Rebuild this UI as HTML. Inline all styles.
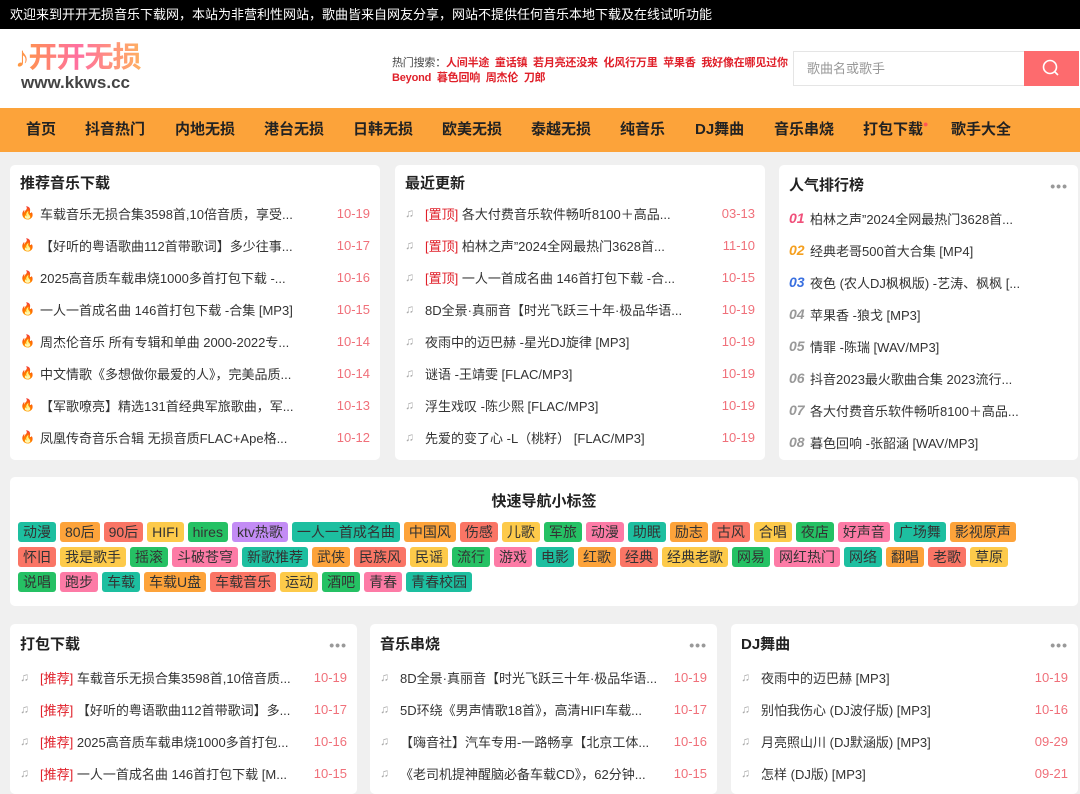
<!DOCTYPE html>
<html><head><meta charset="utf-8"><style>
*{margin:0;padding:0;box-sizing:border-box}
body{width:1080px;height:783px;overflow:hidden;background:#f0f0f0;font-family:"Liberation Sans","Noto Sans CJK SC",sans-serif;color:#333;position:relative}
.top{position:absolute;left:0;top:0;width:1080px;height:29px;background:#000;color:#fff;font-size:13px;line-height:29px;padding-left:10px}
.hdr{position:absolute;left:0;top:29px;width:1080px;height:79px;background:#fff}
.nav{position:absolute;left:0;top:108px;width:1080px;height:44px;background:#fca33a}
.nav span{position:absolute;top:0;line-height:44px;font-size:15px;font-weight:bold;color:#222}
.card{position:absolute;background:#fff;border-radius:5px;padding:0 10px}
.ttl{font-size:15px;font-weight:bold;color:#222;height:24px;line-height:22px;margin-top:8px;position:relative}
.dots{position:absolute;right:0;top:0;color:#999;font-size:14px;letter-spacing:1px}
.row{height:32px;display:flex;align-items:center;font-size:13px;color:#333;white-space:nowrap}
.row .t{flex:1;overflow:hidden;text-overflow:ellipsis}
.row .d{color:#f0707a;margin-left:8px}
.ic{width:20px;flex:none;color:#aaa;font-size:12px}
.red{color:#e0202a}
.rk{font-style:italic;font-weight:bold;width:21px;flex:none;font-size:14px;color:#999}
.tags{position:absolute;left:18px;top:522px;width:1050px}
.tags span{float:left;height:20px;line-height:20px;font-size:14px;padding:0 5px;margin:0 4px 5px 0;border-radius:3px;color:#333}
.a{background:#1dbfa0}.b{background:#fda33a}.c{background:#fa7565}.y{background:#fdca4a}.g{background:#25c164}.p{background:#c38cf5}.k{background:#fd7ba6}
</style></head><body>
<div class="top">欢迎来到开开无损音乐下载网，本站为非营利性网站，歌曲皆来自网友分享，网站不提供任何音乐本地下载及在线试听功能</div>
<div class="hdr">
 <div style="position:absolute;left:15px;top:13px;font-size:29px;font-weight:bold;line-height:32px;letter-spacing:-1px;background:linear-gradient(90deg,#ff9a3c,#ff6fa0,#ffb060);-webkit-background-clip:text;color:transparent">♪开开无损</div>
 <div style="position:absolute;left:21px;top:44px;font-size:17px;font-weight:bold;color:#444">www.kkws.cc</div>
 <div style="position:absolute;left:392px;top:27px;font-size:11px;line-height:15px;font-weight:bold;color:#e0202a;white-space:nowrap;letter-spacing:-0.2px"><span style="color:#444;font-weight:normal">热门搜索：</span>人间半途&nbsp; 童话镇&nbsp; 若月亮还没来&nbsp; 化风行万里&nbsp; 苹果香&nbsp; 我好像在哪见过你<br>Beyond&nbsp; 暮色回响&nbsp; 周杰伦&nbsp; 刀郎</div>
 <div style="position:absolute;left:793px;top:22px;width:232px;height:35px;border:1px solid #e5e5e5;font-size:13px;color:#999;line-height:33px;padding-left:13px">歌曲名或歌手</div>
 <div style="position:absolute;left:1024px;top:22px;width:55px;height:35px;background:#fd6b6e"><svg width="55" height="35"><circle cx="26" cy="16" r="6.5" fill="none" stroke="#fff" stroke-width="1.6"/><line x1="31" y1="21" x2="34" y2="24" stroke="#fff" stroke-width="1.6"/></svg></div>
</div>
<div class="nav">
<span style="left:26px">首页</span><span style="left:85px">抖音热门</span><span style="left:175px">内地无损</span><span style="left:264px">港台无损</span><span style="left:353px">日韩无损</span><span style="left:442px">欧美无损</span><span style="left:531px">泰越无损</span><span style="left:620px">纯音乐</span><span style="left:695px">DJ舞曲</span><span style="left:774px">音乐串烧</span><span style="left:863px">打包下载<b style="color:#f55;font-size:9px;vertical-align:top;position:relative;top:-6px">●</b></span><span style="left:951px">歌手大全</span>
</div>

<div class="card" style="left:10px;top:165px;width:370px;height:295px">
<div class="ttl">推荐音乐下载</div>
<div class="row"><span class="ic" style="color:#f06a2a">🔥</span><span class="t">车载音乐无损合集3598首,10倍音质，享受...</span><span class="d">10-19</span></div>
<div class="row"><span class="ic" style="color:#f06a2a">🔥</span><span class="t">【好听的粤语歌曲112首带歌词】多少往事...</span><span class="d">10-17</span></div>
<div class="row"><span class="ic" style="color:#f06a2a">🔥</span><span class="t">2025高音质车载串烧1000多首打包下载 -...</span><span class="d">10-16</span></div>
<div class="row"><span class="ic" style="color:#f06a2a">🔥</span><span class="t">一人一首成名曲 146首打包下载 -合集 [MP3]</span><span class="d">10-15</span></div>
<div class="row"><span class="ic" style="color:#f06a2a">🔥</span><span class="t">周杰伦音乐 所有专辑和单曲 2000-2022专...</span><span class="d">10-14</span></div>
<div class="row"><span class="ic" style="color:#f06a2a">🔥</span><span class="t">中文情歌《多想做你最爱的人》，完美品质...</span><span class="d">10-14</span></div>
<div class="row"><span class="ic" style="color:#f06a2a">🔥</span><span class="t">【军歌嘹亮】精选131首经典军旅歌曲，军...</span><span class="d">10-13</span></div>
<div class="row"><span class="ic" style="color:#f06a2a">🔥</span><span class="t">凤凰传奇音乐合辑 无损音质FLAC+Ape格...</span><span class="d">10-12</span></div>
</div>

<div class="card" style="left:395px;top:165px;width:370px;height:295px">
<div class="ttl">最近更新</div>
<div class="row"><span class="ic">♫</span><span class="t"><span class="red">[置顶]</span> 各大付费音乐软件畅听8100＋高品...</span><span class="d">03-13</span></div>
<div class="row"><span class="ic">♫</span><span class="t"><span class="red">[置顶]</span> 柏林之声”2024全网最热门3628首...</span><span class="d">11-10</span></div>
<div class="row"><span class="ic">♫</span><span class="t"><span class="red">[置顶]</span> 一人一首成名曲 146首打包下载 -合...</span><span class="d">10-15</span></div>
<div class="row"><span class="ic">♫</span><span class="t">8D全景·真丽音【时光飞跃三十年·极品华语...</span><span class="d">10-19</span></div>
<div class="row"><span class="ic">♫</span><span class="t">夜雨中的迈巴赫 -星光DJ旋律 [MP3]</span><span class="d">10-19</span></div>
<div class="row"><span class="ic">♫</span><span class="t">谜语 -王靖雯 [FLAC/MP3]</span><span class="d">10-19</span></div>
<div class="row"><span class="ic">♫</span><span class="t">浮生戏叹 -陈少熙 [FLAC/MP3]</span><span class="d">10-19</span></div>
<div class="row"><span class="ic">♫</span><span class="t">先爱的变了心 -L（桃籽） [FLAC/MP3]</span><span class="d">10-19</span></div>
</div>

<div class="card" style="left:779px;top:165px;width:299px;height:295px">
<div class="ttl" style="margin-top:10px;height:27px">人气排行榜<span class="dots">•••</span></div>
<div class="row"><span class="rk" style="color:#f0507a">01</span><span class="t">柏林之声”2024全网最热门3628首...</span></div>
<div class="row"><span class="rk" style="color:#f5a020">02</span><span class="t">经典老哥500首大合集 [MP4]</span></div>
<div class="row"><span class="rk" style="color:#3a70e0">03</span><span class="t">夜色 (农人DJ枫枫版) -艺涛、枫枫 [...</span></div>
<div class="row"><span class="rk">04</span><span class="t">苹果香 -狼戈 [MP3]</span></div>
<div class="row"><span class="rk">05</span><span class="t">情罪 -陈瑞 [WAV/MP3]</span></div>
<div class="row"><span class="rk">06</span><span class="t">抖音2023最火歌曲合集 2023流行...</span></div>
<div class="row"><span class="rk">07</span><span class="t">各大付费音乐软件畅听8100＋高品...</span></div>
<div class="row"><span class="rk">08</span><span class="t">暮色回响 -张韶涵 [WAV/MP3]</span></div>
</div>

<div class="card" style="left:10px;top:477px;width:1068px;height:129px">
<div style="text-align:center;font-size:15px;font-weight:bold;color:#222;margin-top:13px">快速导航小标签</div>
</div>
<div class="tags">
<span class="a">动漫</span><span class="b">80后</span><span class="c">90后</span><span class="y">HIFI</span><span class="g">hires</span><span class="p">ktv热歌</span><span class="a">一人一首成名曲</span><span class="b">中国风</span><span class="c">伤感</span><span class="y">儿歌</span><span class="g">军旅</span><span class="k">动漫</span><span class="a">助眠</span><span class="b">励志</span><span class="c">古风</span><span class="y">合唱</span><span class="g">夜店</span><span class="k">好声音</span><span class="a">广场舞</span><span class="b">影视原声</span>
<span class="c" style="clear:left">怀旧</span><span class="y">我是歌手</span><span class="g">摇滚</span><span class="k">斗破苍穹</span><span class="a">新歌推荐</span><span class="b">武侠</span><span class="c">民族风</span><span class="y">民谣</span><span class="g">流行</span><span class="k">游戏</span><span class="a">电影</span><span class="b">红歌</span><span class="c">经典</span><span class="y">经典老歌</span><span class="g">网易</span><span class="k">网红热门</span><span class="a">网络</span><span class="b">翻唱</span><span class="c">老歌</span><span class="y">草原</span>
<span class="g" style="clear:left">说唱</span><span class="k">跑步</span><span class="a">车载</span><span class="b">车载U盘</span><span class="c">车载音乐</span><span class="y">运动</span><span class="g">酒吧</span><span class="k">青春</span><span class="a">青春校园</span>
</div>

<div class="card" style="left:10px;top:624px;width:347px;height:170px">
<div class="ttl" style="margin-top:10px;height:27px">打包下载<span class="dots">•••</span></div>
<div class="row"><span class="ic">♫</span><span class="t"><span class="red">[推荐]</span> 车载音乐无损合集3598首,10倍音质...</span><span class="d">10-19</span></div>
<div class="row"><span class="ic">♫</span><span class="t"><span class="red">[推荐]</span> 【好听的粤语歌曲112首带歌词】多...</span><span class="d">10-17</span></div>
<div class="row"><span class="ic">♫</span><span class="t"><span class="red">[推荐]</span> 2025高音质车载串烧1000多首打包...</span><span class="d">10-16</span></div>
<div class="row"><span class="ic">♫</span><span class="t"><span class="red">[推荐]</span> 一人一首成名曲 146首打包下载 [M...</span><span class="d">10-15</span></div>
</div>
<div class="card" style="left:370px;top:624px;width:347px;height:170px">
<div class="ttl" style="margin-top:10px;height:27px">音乐串烧<span class="dots">•••</span></div>
<div class="row"><span class="ic">♫</span><span class="t">8D全景·真丽音【时光飞跃三十年·极品华语...</span><span class="d">10-19</span></div>
<div class="row"><span class="ic">♫</span><span class="t">5D环绕《男声情歌18首》，高清HIFI车载...</span><span class="d">10-17</span></div>
<div class="row"><span class="ic">♫</span><span class="t">【嗨音社】汽车专用-一路畅享【北京工体...</span><span class="d">10-16</span></div>
<div class="row"><span class="ic">♫</span><span class="t">《老司机提神醒脑必备车载CD》，62分钟...</span><span class="d">10-15</span></div>
</div>
<div class="card" style="left:731px;top:624px;width:347px;height:170px">
<div class="ttl" style="margin-top:10px;height:27px">DJ舞曲<span class="dots">•••</span></div>
<div class="row"><span class="ic">♫</span><span class="t">夜雨中的迈巴赫 [MP3]</span><span class="d">10-19</span></div>
<div class="row"><span class="ic">♫</span><span class="t">别怕我伤心 (DJ波仔版) [MP3]</span><span class="d">10-16</span></div>
<div class="row"><span class="ic">♫</span><span class="t">月亮照山川 (DJ默涵版) [MP3]</span><span class="d">09-29</span></div>
<div class="row"><span class="ic">♫</span><span class="t">怎样 (DJ版) [MP3]</span><span class="d">09-21</span></div>
</div>
</body></html>
